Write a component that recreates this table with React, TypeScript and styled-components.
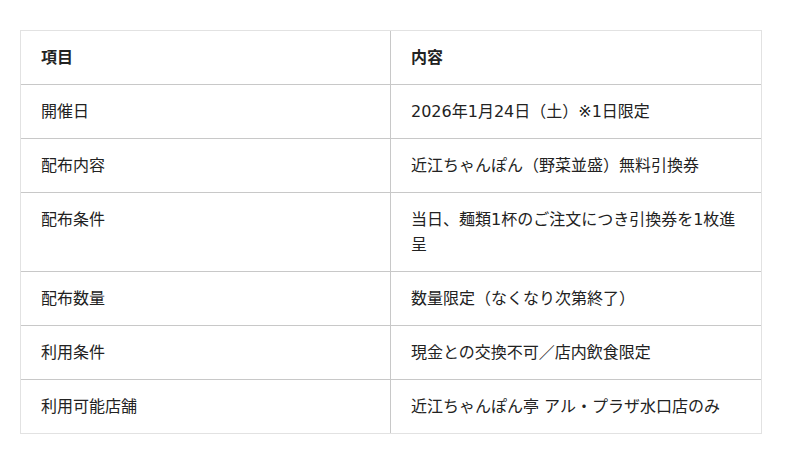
import { createGlobalStyle, styled } from 'styled-components'

const GlobalStyle = createGlobalStyle`
  html, body {
    margin: 0;
    padding: 0;
    background: #fff;
  }
  body {
    font-family: "DejaVu Sans", "Noto Sans CJK JP", sans-serif;
    color: #222;
  }
`

const rows: [string, string][] = [
  ['開催日', '2026年1月24日（土）※1日限定'],
  ['配布内容', '近江ちゃんぽん（野菜並盛）無料引換券'],
  ['配布条件', '当日、麺類1杯のご注文につき引換券を1枚進呈'],
  ['配布数量', '数量限定（なくなり次第終了）'],
  ['利用条件', '現金との交換不可／店内飲食限定'],
  ['利用可能店舗', '近江ちゃんぽん亭 アル・プラザ水口店のみ'],
]

export default function App(): JSX.Element {
  return (
    <>
      <GlobalStyle />
      <Page>
        <Table>
          <Row $first>
            <Cell $head>項目</Cell>
            <Cell $head $last>内容</Cell>
          </Row>
          {rows.map(([label, value]) => (
            <Row key={label}>
              <Cell>{label}</Cell>
              <Cell $last>{value}</Cell>
            </Row>
          ))}
        </Table>
      </Page>
    </>
  )
}

const Page = styled.div`
  padding: 30px 20px;
`

const Table = styled.div`
  width: 742px;
  box-sizing: border-box;
  border: 1px solid #e2e2e2;
`

const Row = styled.div<{ $first?: boolean }>`
  display: grid;
  grid-template-columns: 370px 1fr;
  border-top: ${({ $first }) => ($first ? 'none' : '1px solid #c8c8c8')};
`

const Cell = styled.div<{ $head?: boolean; $last?: boolean }>`
  padding: 14px 20px;
  font-size: 16px;
  line-height: 25px;
  font-weight: ${({ $head }) => ($head ? 700 : 400)};
  border-right: ${({ $last }) => ($last ? 'none' : '1px solid #c8c8c8')};
  box-sizing: border-box;
`
